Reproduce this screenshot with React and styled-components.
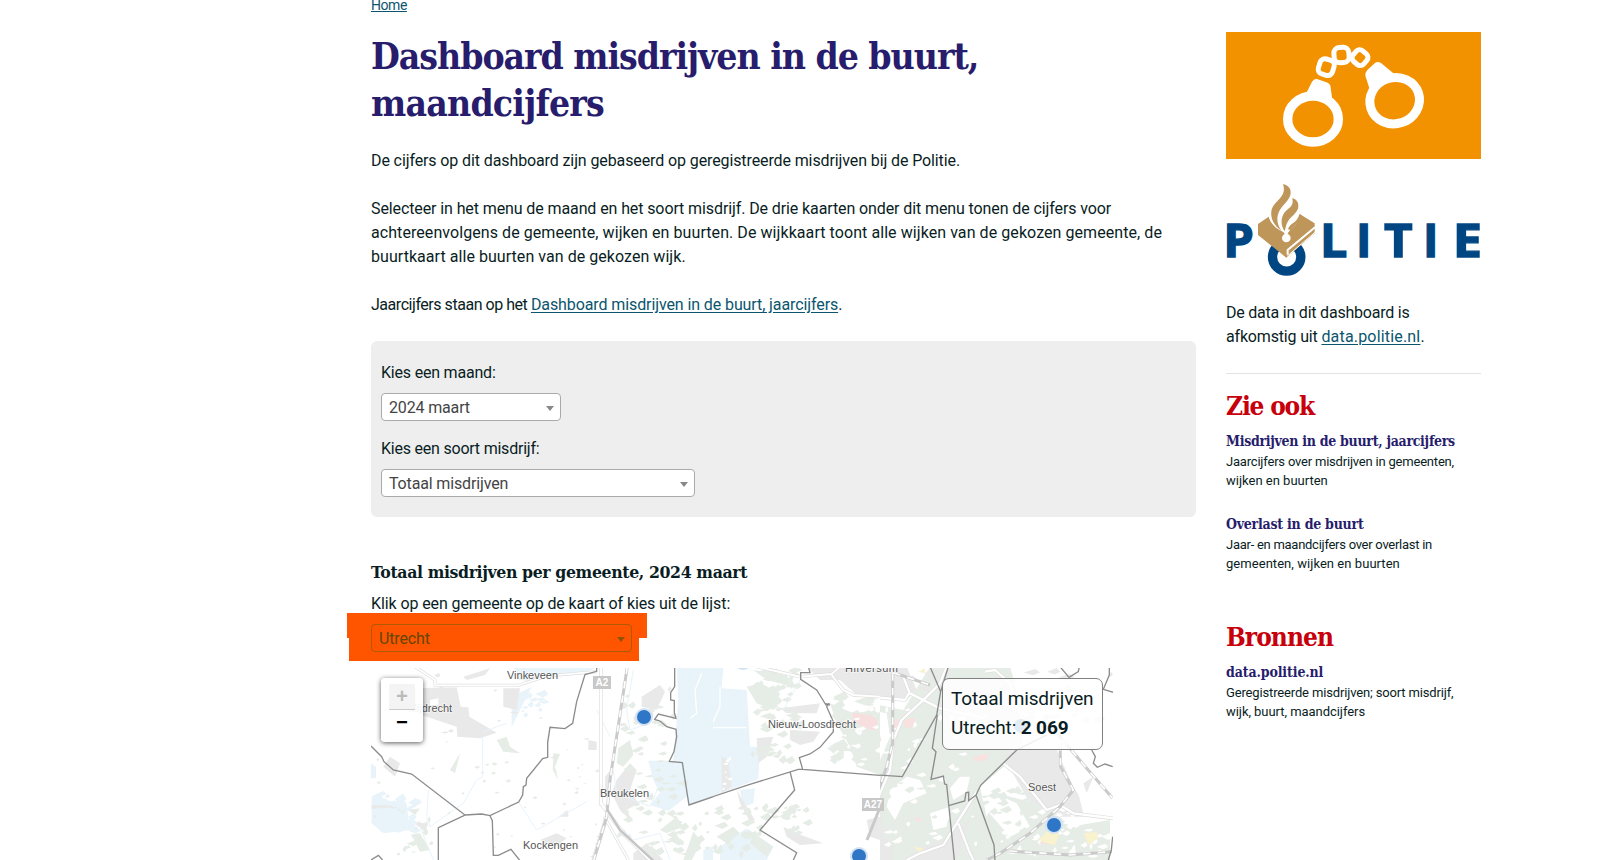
import React from 'react';
import styled, { createGlobalStyle } from 'styled-components';

const sans = "Roboto, 'Noto Sans', sans-serif";
const slab = "'DejaVu Serif Condensed', 'DejaVu Serif', serif";

const Global = createGlobalStyle`
  *, *::before, *::after { box-sizing: border-box; }
  body { margin: 0; background: #fff; color: #091d23; font: 16px/24px ${sans}; overflow: hidden; }
  h1, h2, h3, h4, p { margin: 0; }
`;

const Page = styled.div`
  display: flex;
  gap: 30px;
  height: 860px;
  padding-left: 371px;
  overflow: hidden;
`;
const Main = styled.main`
  width: 825px;
  flex: none;
`;
const Aside = styled.aside`
  width: 255px;
  flex: none;
  padding-top: 32px;
`;
const Link = styled.a`
  color: #0b556e;
  text-decoration: underline;
  text-underline-offset: 2px;
`;
const Crumbs = styled.nav`
  height: 33px;
  font-size: 14px;
  line-height: 20px;
  letter-spacing: -0.45px;
  a { position: relative; top: -5px; text-underline-offset: 1px; }
`;
const Line = styled.span`
  display: block;
  white-space: nowrap;
  letter-spacing: ${(p) => p.$track || 0}px;
`;
const Run = styled.span`
  letter-spacing: ${(p) => p.$track}px;
`;
const Title = styled.h1`
  color: #271d6c;
  font: bold 37px/47px ${slab};
`;
const Intro = styled.div`
  display: flex;
  flex-direction: column;
  gap: 24px;
  margin: 22px 0 24px;
`;
const Filters = styled.form`
  display: flex;
  flex-direction: column;
  height: 176px;
  padding: 20px 10px;
  border-radius: 6px;
  background: #eee;
`;
const Field = styled.label`
  display: flex;
  flex-direction: column;
  gap: 8px;
  margin-bottom: 16px;
`;
const Select = styled.span`
  display: flex;
  align-items: center;
  justify-content: space-between;
  position: relative;
  width: ${(p) => p.$width}px;
  height: 28px;
  padding: 2px 6px 0 7px;
  border: 1px solid ${(p) => (p.$marked ? '#b05a00' : '#aaa')};
  border-radius: 4px;
  background: ${(p) => (p.$marked ? 'transparent' : '#fff')};
  color: ${(p) => (p.$marked ? '#614700' : '#444')};
  letter-spacing: -0.15px;
  &::after {
    content: '';
    border: 4px solid transparent;
    border-top: 5px solid ${(p) => (p.$marked ? '#8f5300' : '#888')};
    border-bottom: 0;
  }
`;
const MapHead = styled.section`
  padding-top: 43px;
  height: 151px;
`;
const SubTitle = styled.h2`
  font: bold 17.5px/24px ${slab};
  margin-bottom: 8px;
`;
const Picker = styled.div`
  position: relative;
  margin-top: 8px;
  &::before, &::after {
    content: '';
    position: absolute;
    background: #f50;
  }
  &::before { left: -24px; top: -11px; width: 300px; height: 25px; }
  &::after { left: -22px; top: 14px; width: 290px; height: 23px; }
  ${Select} { z-index: 1; }
`;
const MapBox = styled.div`
  position: relative;
  width: 742px;
  height: 192px;
  overflow: hidden;
  svg { display: block; }
`;
const ZoomControl = styled.div`
  position: absolute;
  left: 10px;
  top: 10px;
  width: 42px;
  height: 64px;
  padding: 6px 8px;
  border-radius: 4px;
  background: rgba(255, 255, 255, 0.92);
  box-shadow: 0 1px 5px rgba(0, 0, 0, 0.65);
`;
const ZoomButton = styled.div`
  height: 26px;
  border-bottom: ${(p) => (p.$disabled ? '1px solid #ccc' : '0')};
  border-radius: 2px 2px 0 0;
  background: ${(p) => (p.$disabled ? '#f4f4f4' : 'transparent')};
  color: ${(p) => (p.$disabled ? '#bbb' : '#000')};
  font: bold 20px/28px 'Liberation Mono', monospace;
  text-align: center;
`;
const Readout = styled.div`
  position: absolute;
  left: 571px;
  top: 10px;
  width: 161px;
  height: 72px;
  padding: 5px 8px;
  border: 1px solid #808080;
  border-radius: 7px;
  background: rgba(255, 255, 255, 0.85);
  font-size: 19px;
  line-height: 29px;
  letter-spacing: -0.12px;
  white-space: nowrap;
`;
const Banner = styled.svg`
  display: block;
  width: 255px;
  height: 127px;
  background: #f39200;
`;
const Logo = styled.svg`
  display: block;
  margin-top: 25px;
  width: 255px;
  height: 93px;
  overflow: visible;
`;
const SourceText = styled.p`
  margin-top: 24px;
  padding-bottom: 24px;
  border-bottom: 1px solid #e3e3e3;
`;
const Group = styled.section`
  height: 231px;
  padding-top: 16px;
`;
const GroupTitle = styled.h3`
  height: 42px;
  color: #c7000b;
  font: bold 26px/32px ${slab};
`;
const Item = styled.article`
  height: 83px;
  font-size: 13px;
  line-height: 19px;
`;
const ItemTitle = styled.h4`
  margin-bottom: 1px;
  color: #271d6c;
  font: bold 14px/19px ${slab};
`;

const Handcuffs = () => (
  <Banner viewBox="-147 -9 765 381">
    <g fill="none" stroke="#fff">
      <ellipse cx="114" cy="252" rx="76" ry="69" strokeWidth="28" />
      <ellipse cx="359" cy="197" rx="75" ry="69" strokeWidth="27" transform="rotate(-18 359 197)" />
      <rect x="132" y="73" width="44" height="47" rx="15" strokeWidth="15" transform="rotate(17 154 96)" />
      <rect x="177" y="37" width="45" height="46" rx="17" strokeWidth="15" transform="rotate(-4 200 60)" />
      <rect x="234" y="47" width="42" height="42" rx="14" strokeWidth="15" transform="rotate(40 255 68)" />
    </g>
    <path fill="#fff" d="M91 180L111 140Q117 130 126 132L158 143Q167 148 167 158L172 194Q144 172 91 180Z" />
    <path fill="#fff" d="M285 166L271 122Q270 113 277 105L300 84Q308 78 318 84L357 116L322 146L287 178Z" />
  </Banner>
);

const PolitieLogo = () => (
  <Logo viewBox="48 42 765 279">
    <circle cx="230" cy="261" r="42.5" fill="none" stroke="#004682" strokeWidth="28" />
    <path fill="#be965a" d="M144 162L176 140C184 162 204 172 218 182L228 190L236 182C250 170 268 155 269 132L314 160V190L229 263L144 195Z" />
    <path fill="#fff" d="M176 136C178 160 200 178 220 186L224 192L233 192C238 176 270 166 270 130L240 96L190 110Z" />
    <path fill="#be965a" d="M219 42C246 48 246 72 236 86C222 106 203 118 202 146C202 158 206 170 214 182C194 168 181 148 184 124C190 90 233 84 219 42Z" />
    <path fill="#be965a" d="M247 84C262 88 268 102 264 116C256 136 234 142 228 168L224 184C212 166 212 146 222 130C234 112 253 112 247 84Z" />
    <path fill="#be965a" d="M268 132L280 140L242 180L234 178C240 158 264 158 268 132Z" />
    <circle cx="229" cy="204" r="13" fill="#fff" />
    <path fill="none" stroke="#fff" strokeWidth="6" d="M315 172L233 240V254" />
    <path fill="none" stroke="#fff" strokeWidth="3" d="M316 186L232 258" />
    <g fill="#004682" stroke="#004682" strokeWidth="4" fontFamily="'Open Sans', sans-serif" fontWeight="bold" fontSize="140">
      <text x="40" y="260" textLength="92" lengthAdjust="spacingAndGlyphs">P</text>
      <text x="330" y="260" textLength="82" lengthAdjust="spacingAndGlyphs">L</text>
      <text x="438" y="260">I</text>
      <text x="522" y="260" textLength="86" lengthAdjust="spacingAndGlyphs">T</text>
      <text x="639" y="260">I</text>
      <text x="728" y="260" textLength="88" lengthAdjust="spacingAndGlyphs">E</text>
    </g>
  </Logo>
);

// Small irregular patches of woodland or built-up land, spread over a rectangle.
const scatter = (seed, x, y, w, h, count, size) => {
  let s = seed;
  const r = () => ((s = (s * 16807) % 2147483647) / 2147483647);
  let d = '';
  for (let i = 0; i < count; i++) {
    const a = size * (0.4 + r());
    const b = size * (0.2 + r() * 0.5);
    d += `M${(x + r() * w).toFixed(1)} ${(y + r() * h).toFixed(1)}l${a.toFixed(1)} ${(-b).toFixed(1)}l${(a * 0.4).toFixed(1)} ${b.toFixed(1)}l${(-a * 0.6).toFixed(1)} ${(b * 0.8).toFixed(1)}z`;
  }
  return d;
};

const GREEN = '#e6ece6';
const GREY = '#e9e9e9';
const WATER = '#e8f3fa';

const Road = ({ d, w = 9 }) => (
  <g fill="none" strokeLinejoin="round">
    <path d={d} stroke="#dedede" strokeWidth={w + 4} />
    <path d={d} stroke="#fff" strokeWidth={w} />
  </g>
);
const Rail = ({ d }) => (
  <g fill="none">
    <path d={d} stroke="#cacaca" strokeWidth="9" />
    <path d={d} stroke="#fff" strokeWidth="5" strokeDasharray="22 22" />
  </g>
);
const Marker = ({ x, y }) => <circle cx={x} cy={y} r="8" fill="#2f76c6" stroke="#d3e3f5" strokeWidth="2" />;
const Place = ({ x, y, w, children }) => (
  <text x={x} y={y} textLength={w} fontSize="11" fill="#555" stroke="#fff" strokeWidth="1.5" strokeOpacity=".6" paintOrder="stroke">{children}</text>
);
const Shield = ({ x, y, w, children }) => (
  <g>
    <rect x={x} y={y} width={w} height="13" fill="#c8c8c8" />
    <text x={x + w / 2} y={y + 10} textAnchor="middle" fontSize="10" fontWeight="bold" fill="#fff">{children}</text>
  </g>
);

const WestMap = () => (
  <g transform="translate(-31 -118) scale(.33333)">
    <path fill={WATER} d="M520 354H765L730 372L600 385L560 400ZM1010 354H1260V695L1047 765L1040 740L985 783L930 765L960 728L940 690L925 632H1000L1008 540L1015 450ZM515 440L575 410L540 480L515 530ZM95 740L200 765L210 840L130 850L95 820ZM93 640L108 650V685H93ZM1090 900L1190 860L1230 900L1200 930H1090Z" />
    <path fill={GREY} d="M225 415L350 412L362 470L385 472L388 500L470 548L420 565L352 560L350 530L260 500L225 490ZM370 380L450 355L435 375L380 390ZM490 415H540L530 480L490 470ZM905 440L960 405L975 425L950 480L905 470ZM150 620L180 640L165 680L130 650ZM745 570L770 575V600H745ZM830 690L870 640L890 660L870 720L895 760L860 780L880 820L840 780L815 730ZM600 870L650 850L680 865L640 895ZM795 680L812 660V730H795ZM880 910L920 880L970 930H880ZM655 800L685 780V800ZM95 765L170 768L165 776H95ZM220 818L265 820L255 845Z" />
    <path fill={GREEN} d="M470 570L500 560L510 590L540 610L490 605ZM640 610L660 612L645 650L655 690L638 660ZM330 660L360 610L345 670ZM835 595L870 570L880 615L850 650L830 640ZM1005 700L1045 690L1040 710ZM960 840L1010 800L1030 830L980 850ZM1140 625L1170 620L1165 690L1150 690ZM1180 630L1240 625L1230 660L1190 670ZM1060 845L1085 875L1055 930H1030ZM205 780L240 775L225 795ZM215 855L240 850L270 900L240 905Z" />
    <path fill={GREEN} d={scatter(11, 100, 560, 700, 360, 40, 9) + scatter(7, 830, 400, 170, 500, 55, 18) + scatter(19, 900, 780, 340, 140, 45, 20) + scatter(29, 180, 770, 90, 130, 14, 18)} />
    <path fill={GREY} d={scatter(3, 240, 370, 300, 180, 14, 14) + scatter(91, 350, 620, 420, 300, 14, 8)} />
    <path fill={WATER} d={scatter(5, 93, 730, 120, 120, 40, 24) + scatter(8, 540, 430, 60, 80, 14, 20)} />
    <path fill="#fff" d="M270 450L295 445V465H270ZM295 520L340 540L320 525ZM1000 660L1020 610L1010 640Z" />
    <path fill="none" stroke="#fff" strokeWidth="4" d="M1085 370L1065 420L1070 490L1050 505" />
    <path fill="none" stroke={WATER} strokeWidth="3" d="M428 560V680L410 690L370 760L270 830L260 800L265 720M535 755L590 840L740 755M880 360L860 480L870 540L930 520M430 545L500 520M240 830L280 930M770 480L810 560M960 700L930 770L830 730L820 660M840 830L880 870L960 850L990 930" />
    <Road w={5} d="M225 350L285 390V406H535L620 378L770 365" />
    <Road w={8} d="M783 350V760L850 850L930 930M760 930L800 800" />
    <Road w={5} d="M793 800L865 930" />
    <Rail d="M862 350L810 690L800 800L760 935" />
    <path fill="none" stroke="#c4c4c4" strokeWidth="7" d="M802 780L840 840L940 932" />
    <path fill="none" stroke="#8c8c8c" strokeWidth="4" d="M93 588L125 620L132 635L160 660L215 672L375 795L295 833V932M375 795L425 792L450 797L536 756L548 735L550 710L558 705L560 685L608 626L623 622V578L630 532L675 536L698 520L710 455L735 374L770 364V354M450 797L457 812L460 916H475L513 898L540 932M1004 354V410L992 428V450L1003 452V488L1008 505L955 492L944 508L960 513L980 530L1008 538L1010 560L1002 605L988 634L1027 638L1047 765L1260 692M93 930L115 916L128 930" />
  </g>
);

const MiddleMap = () => (
  <g transform="translate(269 -8) scale(.33333)">
    <path fill={WATER} d="M110 20H250L245 85L320 90L330 260H360L355 358L150 433L75 450L95 395L30 305H90L108 200ZM300 390L345 385L340 430L310 440ZM240 560L320 505L400 560L380 600H240Z" />
    <path fill={GREY} d="M500 20H720V110L650 105L600 60L540 60ZM450 210L540 215L520 245L480 255L450 240ZM350 235L400 230L380 290L355 310ZM420 145L540 130L530 160L440 160ZM430 500L470 520L550 550L480 555L440 530ZM680 480L720 470V540L690 530ZM245 290L265 300L275 380L245 400ZM290 390L320 440L345 480L330 485L300 430Z" />
    <path fill={GREEN} d="M570 130L640 160L720 150V345L650 320L630 260L590 190ZM320 80L360 70L420 100L400 150L350 130ZM340 30L440 45L460 80L380 60ZM420 470L450 440L470 445L440 480ZM230 530L280 500L300 520L260 550ZM340 520L400 560L380 590L330 550Z" />
    <path fill={GREEN} d={scatter(31, 330, 25, 130, 290, 60, 22) + scatter(17, 215, 440, 170, 150, 34, 22) + scatter(43, 420, 440, 70, 90, 14, 20) + scatter(21, 560, 110, 160, 210, 40, 30)} />
    <path fill="#f8dfdf" d="M637 158L690 165L714 180L705 212L670 200L640 185Z" />
    <path fill="#fff" d={scatter(61, 575, 120, 140, 200, 18, 16) + scatter(71, 240, 290, 25, 110, 8, 10)} />
    <path fill="none" stroke="#fff" strokeWidth="4" d="M240 80V140L215 195M110 203H320" />
    <path fill="none" stroke={WATER} strokeWidth="3" d="M480 60L430 150" />
    <Road d="M350 20L480 50L575 42L600 20M575 45L610 90L640 105L720 110" w={6} />
    <path fill="none" stroke="#8c8c8c" strokeWidth="4" d="M505 20L510 38H482V58L530 90L558 135L568 130L560 140L580 185V215L540 262L510 282L478 293L488 328L720 346M147 434L320 376L475 328L488 328M450 335L464 390L360 510L470 578L460 600M555 130L570 135" />
  </g>
);

const EastMap = () => (
  <g transform="translate(499 -8) scale(.33333)">
    <path fill={GREEN} d="M0 130L100 150L180 20H420L440 90L460 270L330 380L370 560L380 600H0V345Z" />
    <path fill={GREY} d="M0 20H110L140 90L110 120L0 110ZM400 290L440 270H560L610 380L650 440L560 460L480 430ZM560 440L640 425V470H570ZM0 470L30 440L40 520L70 560V600H0ZM640 370L670 350L650 400ZM220 540L300 480L260 600H100L160 560Z" />
    <path fill={GREEN} d="M380 400L540 440L600 500L720 480V600H380L350 470Z" />
    <path fill="#fff" d="M0 150L50 160L60 230L30 300H0ZM60 390L110 350L150 360L170 400L100 430L75 480L50 440ZM330 380L440 430L480 500L420 530L350 450ZM180 460L240 440L230 500L190 510ZM270 350L300 350L290 395L250 420L240 385ZM560 230L640 300L728 430V220L620 170ZM620 380L728 440V470L640 460Z" />
    <path fill="#fff" d={scatter(101, 10, 130, 320, 430, 50, 17) + scatter(103, 380, 430, 340, 160, 50, 18)} />
    <path fill={GREEN} d={scatter(109, 330, 380, 140, 180, 35, 20) + scatter(113, 30, 360, 160, 200, 28, 18)} />
    <path fill={GREY} d={scatter(131, 380, 30, 340, 170, 26, 25) + scatter(137, 100, 40, 140, 80, 12, 22)} />
    <path fill="#f8e2e0" d="M60 200L80 175L95 190L75 205ZM100 180L135 172L130 200L105 205ZM310 290L355 280L350 300L315 305ZM10 235L30 225L35 245ZM505 550L530 535L535 555ZM130 475L150 470L155 490Z" />
    <path fill="#f9f2cf" d="M505 540L530 515L570 520L555 555L530 550ZM640 520L680 515L685 535L655 555ZM145 35L165 25V40ZM130 560L160 565L150 578Z" />
    <Road d="M0 110L105 120L118 98L100 50L60 30M230 20L210 70L165 115L95 180L70 240L60 330L30 400L5 470M120 100L210 145L350 175" w={7} />
    <Road d="M320 395L260 490L220 555L150 580L110 600M265 490L300 580L310 600M400 310L450 350L530 450L570 435L610 460L730 475M345 35L375 30L420 70L440 140L490 240" w={7} />
    <Rail d="M68 40V250L50 320L5 450M70 38L180 75M570 250L572 320L610 390L570 440L480 520L390 580L350 600M420 573L600 585L725 575M520 170L570 230L650 325L728 415" />
    <path fill="none" stroke="#8c8c8c" strokeWidth="4" d="M180 20L212 95L235 20M212 95L200 165L97 350L0 343M202 165L187 265L198 275L183 358L220 348L224 372L230 374L253 600M236 437L284 423L288 398L296 397V422L318 405L372 555L375 600M318 405L332 376L440 270L530 225M570 20L597 52L625 35L628 20M718 20V45L700 88L730 97M665 270L676 290L670 310L682 322L705 312L728 320M728 530L724 570L715 600" />
  </g>
);

const RegionMap = () => (
  <svg width="742" height="192" viewBox="0 0 742 192" fontFamily="'Liberation Sans', sans-serif">
    <defs>
      <clipPath id="west"><rect width="342" height="192" /></clipPath>
      <clipPath id="middle"><rect x="342" width="167" height="192" /></clipPath>
      <clipPath id="east"><rect x="509" width="233" height="192" /></clipPath>
    </defs>
    <rect width="742" height="192" fill="#fff" />
    <g clipPath="url(#west)"><WestMap /></g>
    <g clipPath="url(#middle)"><MiddleMap /></g>
    <g clipPath="url(#east)"><EastMap /></g>
    <path d="M496 172L508 142" stroke="#cacaca" strokeWidth="3" />
    <Shield x={222} y={8} w={18}>A2</Shield>
    <Shield x={491} y={130} w={22}>A27</Shield>
    <Place x={136} y={11} w={51}>Vinkeveen</Place>
    <Place x={37} y={44} w={44}>Mijdrecht</Place>
    <Place x={229} y={129} w={49}>Breukelen</Place>
    <Place x={152} y={181} w={55}>Kockengen</Place>
    <Place x={397} y={60} w={88}>Nieuw-Loosdrecht</Place>
    <Place x={474} y={4} w={53}>Hilversum</Place>
    <Place x={657} y={123} w={28}>Soest</Place>
    <Marker x={273} y={49} />
    <Marker x={372} y={-7} />
    <Marker x={488} y={188} />
    <Marker x={683} y={157} />
    <circle cx="650" cy="58" r="7" fill="#2f76c6" opacity=".9" />
  </svg>
);

const Entry = ({ title, track, lines }) => (
  <Item>
    <ItemTitle><Line $track={track}>{title}</Line></ItemTitle>
    {lines.map(([text, t]) => <Line key={text} $track={t}>{text}</Line>)}
  </Item>
);

export default function App() {
  return (
    <Page>
      <Global />
      <Main>
        <Crumbs><Link>Home</Link></Crumbs>
        <Title>
          <Line $track={-1.05}>Dashboard misdrijven in de buurt,</Line>
          <Line $track={-0.8}>maandcijfers</Line>
        </Title>
        <Intro>
          <p><Line $track={-0.11}>De cijfers op dit dashboard zijn gebaseerd op geregistreerde misdrijven bij de Politie.</Line></p>
          <p>
            <Line $track={-0.105}>Selecteer in het menu de maand en het soort misdrijf. De drie kaarten onder dit menu tonen de cijfers voor</Line>
            <Line $track={0.07}>achtereenvolgens de gemeente, wijken en buurten. De wijkkaart toont alle wijken van de gekozen gemeente, de</Line>
            <Line $track={0.05}>buurtkaart alle buurten van de gekozen wijk.</Line>
          </p>
          <p><Line $track={-0.1}><Run $track={-0.46}>Jaarcijfers staan op het </Run><Link>Dashboard misdrijven in de buurt, jaarcijfers</Link>.</Line></p>
        </Intro>
        <Filters>
          <Field><Line $track={-0.2}>Kies een maand:</Line><Select $width={180}>2024 maart</Select></Field>
          <Field><Line $track={-0.22}>Kies een soort misdrijf:</Line><Select $width={314}>Totaal misdrijven</Select></Field>
        </Filters>
        <MapHead>
          <SubTitle><Line $track={-0.38}>Totaal misdrijven per gemeente, 2024 maart</Line></SubTitle>
          <Line $track={-0.1}>Klik op een gemeente op de kaart of kies uit de lijst:</Line>
          <Picker><Select $marked $width={261}>Utrecht</Select></Picker>
        </MapHead>
        <MapBox>
          <RegionMap />
          <ZoomControl>
            <ZoomButton $disabled>+</ZoomButton>
            <ZoomButton>−</ZoomButton>
          </ZoomControl>
          <Readout>
            Totaal misdrijven<br />Utrecht: <b>2 069</b>
          </Readout>
        </MapBox>
      </Main>
      <Aside>
        <Handcuffs />
        <PolitieLogo />
        <SourceText>
          <Line $track={-0.22}>De data in dit dashboard is</Line>
          <Line $track={-0.17}>afkomstig uit <Link><Run $track={0.18}>data.politie.nl</Run></Link>.</Line>
        </SourceText>
        <Group>
          <GroupTitle><Line $track={-1.2}>Zie ook</Line></GroupTitle>
          <Entry
            title="Misdrijven in de buurt, jaarcijfers"
            track={-0.29}
            lines={[['Jaarcijfers over misdrijven in gemeenten,', -0.2], ['wijken en buurten', 0]]}
          />
          <Entry
            title="Overlast in de buurt"
            track={-0.24}
            lines={[['Jaar- en maandcijfers over overlast in', -0.27], ['gemeenten, wijken en buurten', 0.05]]}
          />
        </Group>
        <Group>
          <GroupTitle><Line $track={-0.95}>Bronnen</Line></GroupTitle>
          <Entry
            title="data.politie.nl"
            track={-0.12}
            lines={[['Geregistreerde misdrijven; soort misdrijf,', -0.15], ['wijk, buurt, maandcijfers', -0.05]]}
          />
        </Group>
      </Aside>
    </Page>
  );
}
